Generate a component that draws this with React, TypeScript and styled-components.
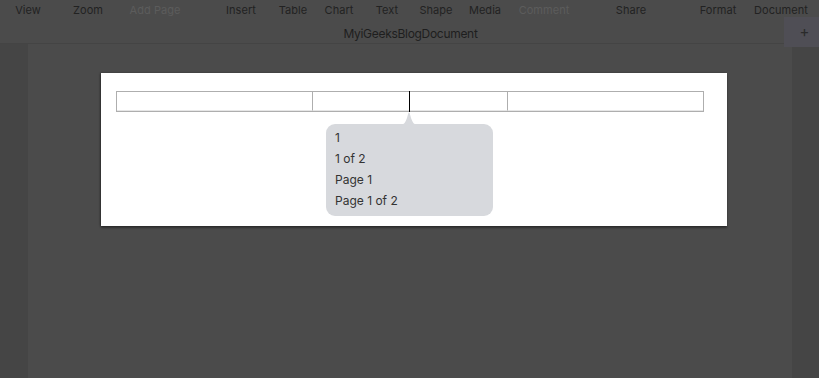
import React from "react";
import styled, { createGlobalStyle } from "styled-components";

const Global = createGlobalStyle`
  html, body { margin: 0; padding: 0; background: #4b4b4b; }
  body { width: 819px; height: 378px; overflow: hidden; font-family: Inter, "Liberation Sans", sans-serif; }
  #root { width: 819px; height: 378px; }
`;

const Shell = styled.div`
  width: 819px;
  height: 378px;
  display: flex;
  flex-direction: column;
  background: #4b4b4b;
`;

const Header = styled.header`
  display: flex;
  flex-direction: column;
  border-bottom: 1px solid #444;
  height: 44px;
  box-sizing: border-box;
`;

const Toolbar = styled.nav`
  display: flex;
  height: 19px;
  padding-left: 8px;
  align-items: center;
`;

const Item = styled.span<{ $gap: number; $dim?: boolean }>`
  width: 40px;
  margin-left: ${(p) => p.$gap}px;
  display: flex;
  justify-content: center;
  white-space: nowrap;
  font-size: 11px;
  color: ${(p) => (p.$dim ? "#5c5c5c" : "#222")};
  letter-spacing: 0.05px;
`;

const TitleRow = styled.div`
  display: grid;
  grid-template-columns: 1fr auto 1fr;
  align-items: center;
  height: 24px;
`;

const Title = styled.div`
  grid-column: 2;
  font-size: 12px;
  letter-spacing: -0.3px;
  color: #1e1e1e;
  margin-left: 2px;
`;

const AddTab = styled.button`
  grid-column: 3;
  justify-self: end;
  align-self: start;
  margin-top: -2px;
  width: 35px;
  height: 30px;
  border: none;
  padding: 0 0 0 6px;
  background: #4f4e55;
  color: #2a2a2a;
  font-size: 15px;
  font-family: Inter, "Liberation Sans", sans-serif;
  line-height: 30px;
  position: relative;
  z-index: 1;
`;

const Main = styled.main`
  flex: 1;
  display: flex;
`;

const Strip = styled.div<{ $w: number }>`
  width: ${(p) => p.$w}px;
  background: #454545;
`;

const Canvas = styled.section`
  flex: 1;
  padding: 29px 0 0 73px;
  box-sizing: border-box;
`;

const Page = styled.div`
  position: relative;
  width: 626px;
  height: 153px;
  background: #fff;
  box-shadow: 0 2px 2px rgba(0, 0, 0, 0.35), -1px 0 2px rgba(0, 0, 0, 0.3);
  padding: 18px 0 0 15px;
  box-sizing: border-box;
`;

const Table = styled.div`
  display: grid;
  grid-template-columns: 195px 97px 98px 196px;
  width: 588px;
  height: 21px;
  border: 1px solid #aeaeae;
  box-sizing: border-box;
`;

const Cell = styled.div<{ $first?: boolean }>`
  position: relative;
  border-left: ${(p) => (p.$first ? "none" : "1px solid #aeaeae")};
  border-bottom: 1px solid #e6e6e6;
`;

const Caret = styled.span`
  position: absolute;
  left: -1px;
  top: -1px;
  width: 1px;
  height: 21px;
  background: #000;
`;

const Popover = styled.div`
  position: absolute;
  left: 225px;
  top: 51px;
  width: 167px;
  height: 92px;
  box-sizing: border-box;
  padding: 3px 9px 6px;
  background: #d7d9dd;
  border-radius: 9px;
  display: flex;
  flex-direction: column;
`;

const Arrow = styled.svg`
  position: absolute;
  left: 73px;
  top: -12px;
`;

const Option = styled.div`
  height: 21px;
  line-height: 21px;
  font-size: 12px;
  color: #333;
`;

const tools: { label: string; gap: number; dim?: boolean }[] = [
  { label: "View", gap: 0 },
  { label: "Zoom", gap: 20 },
  { label: "Add Page", gap: 27, dim: true },
  { label: "Insert", gap: 46 },
  { label: "Table", gap: 12 },
  { label: "Chart", gap: 6 },
  { label: "Text", gap: 8 },
  { label: "Shape", gap: 9 },
  { label: "Media", gap: 9 },
  { label: "Comment", gap: 19, dim: true },
  { label: "Share", gap: 47 },
  { label: "Format", gap: 47 },
  { label: "Document", gap: 23 },
];

const options = ["1", "1 of 2", "Page 1", "Page 1 of 2"];

export default function App() {
  return (
    <>
      <Global />
      <Shell>
        <Header>
          <Toolbar>
            {tools.map((t) => (
              <Item key={t.label} $gap={t.gap} $dim={t.dim}>
                {t.label}
              </Item>
            ))}
          </Toolbar>
          <TitleRow>
            <Title>MyiGeeksBlogDocument</Title>
            <AddTab>+</AddTab>
          </TitleRow>
        </Header>
        <Main>
          <Strip $w={28} />
          <Canvas>
            <Page>
              <Table>
                <Cell $first />
                <Cell />
                <Cell>
                  <Caret />
                </Cell>
                <Cell />
              </Table>
              <Popover>
                <Arrow width="20" height="13" viewBox="0 0 20 13">
                  <path d="M0 13 C5 13 6 11 8 6 L9.3 1.2 Q10 0 10.7 1.2 L12 6 C14 11 15 13 20 13 Z" fill="#d7d9dd" />
                </Arrow>
                {options.map((o) => (
                  <Option key={o}>{o}</Option>
                ))}
              </Popover>
            </Page>
          </Canvas>
          <Strip $w={27} />
        </Main>
      </Shell>
    </>
  );
}
